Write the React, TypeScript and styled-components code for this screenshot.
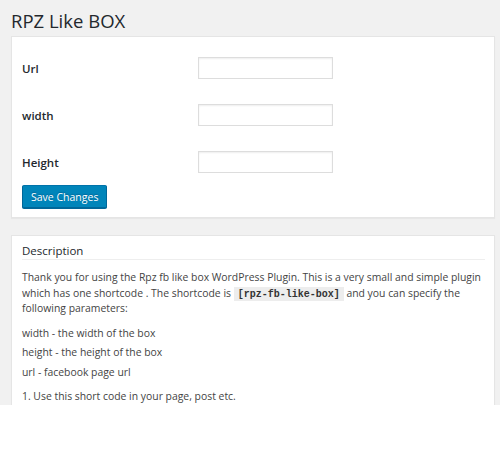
import styled, { createGlobalStyle } from "styled-components";

const GlobalStyle = createGlobalStyle`
  body {
    margin: 0;
    background: #fff;
    font-family: "Open Sans", "Liberation Sans", sans-serif;
  }
`;

const Page = styled.div`
  background: #f1f1f1;
  height: 405px;
  overflow: hidden;
  padding: 0 5px 0 11px;
  color: #444;
`;

const Title = styled.h1`
  margin: 0;
  padding: 8px 0 3px;
  font-size: 18.5px;
  line-height: 25px;
  font-weight: 400;
  color: #23282d;
`;

const Card = styled.div<{ $gap?: number }>`
  background: #fff;
  border: 1px solid #e5e5e5;
  box-shadow: 0 1px 1px rgba(0, 0, 0, 0.04);
  margin-bottom: ${(p) => p.$gap ?? 0}px;
`;

const SettingsForm = styled.form`
  display: flex;
  flex-direction: column;
  padding: 20px 10px 9px;
`;

const Rows = styled.div`
  display: flex;
  flex-direction: column;
  gap: 25px;
`;

const Row = styled.div`
  display: grid;
  grid-template-columns: 176px 135px;
  align-items: center;
  height: 22px;
`;

const Label = styled.label`
  font-size: 11.5px;
  font-weight: 600;
  color: #23282d;
`;

const TextInput = styled.input`
  box-sizing: border-box;
  width: 135px;
  height: 22px;
  border: 1px solid #ddd;
  box-shadow: inset 0 1px 2px rgba(0, 0, 0, 0.07);
  background: #fff;
  padding: 2px 4px;
  font-family: inherit;
  font-size: 11px;
  outline: none;
`;

const PrimaryButton = styled.button`
  align-self: flex-start;
  margin-top: 12px;
  height: 23px;
  padding: 0 8px;
  background: #0085ba;
  border: 1px solid;
  border-color: #0073aa #006799 #006799;
  border-radius: 2px;
  box-shadow: 0 1px 0 #006799;
  color: #fff;
  font-family: inherit;
  font-size: 10.5px;
  line-height: 20px;
  text-shadow: 0 -1px 1px #006799;
  cursor: pointer;
`;

const Section = styled.div`
  padding: 0 9px 0 10px;
`;

const SectionHeading = styled.h2`
  margin: 0;
  padding: 7px 0 0;
  font-size: 11.5px;
  line-height: 16px;
  font-weight: 400;
  color: #23282d;
  border-bottom: 1px solid #eee;
`;

const Body = styled.div`
  padding-top: 10px;
  font-size: 10.4px;
  line-height: 15.5px;
`;

const Para = styled.p<{ $after?: number }>`
  margin: 0 0 ${(p) => p.$after ?? 0}px;
`;

const Code = styled.code`
  font-family: "Liberation Mono", monospace;
  font-weight: 700;
  font-size: 10px;
  line-height: 1;
  background: rgba(0, 0, 0, 0.07);
  padding: 2px 4px 1px;
  color: #333;
`;

const fields = [
  { id: "url", label: "Url" },
  { id: "width", label: "width" },
  { id: "height", label: "Height" },
];

export default function App() {
  return (
    <>
      <GlobalStyle />
      <Page>
        <Title>RPZ Like BOX</Title>
        <Card $gap={17}>
          <SettingsForm onSubmit={(e) => e.preventDefault()}>
            <Rows>
              {fields.map((f) => (
                <Row key={f.id}>
                  <Label htmlFor={f.id}>{f.label}</Label>
                  <TextInput id={f.id} type="text" />
                </Row>
              ))}
            </Rows>
            <PrimaryButton type="submit">Save Changes</PrimaryButton>
          </SettingsForm>
        </Card>
        <Card>
          <Section>
            <SectionHeading>Description</SectionHeading>
            <Body>
              <Para $after={9}>
                Thank you for using the Rpz fb like box WordPress Plugin. This is a very small and
                simple plugin which has one shortcode . The shortcode is <Code>[rpz-fb-like-box]</Code>{" "}
                and you can specify the following parameters:
              </Para>
              <Para $after={4}>width - the width of the box</Para>
              <Para $after={4}>height - the height of the box</Para>
              <Para $after={9}>url - facebook page url</Para>
              <Para>1. Use this short code in your page, post etc.</Para>
            </Body>
          </Section>
        </Card>
      </Page>
    </>
  );
}
